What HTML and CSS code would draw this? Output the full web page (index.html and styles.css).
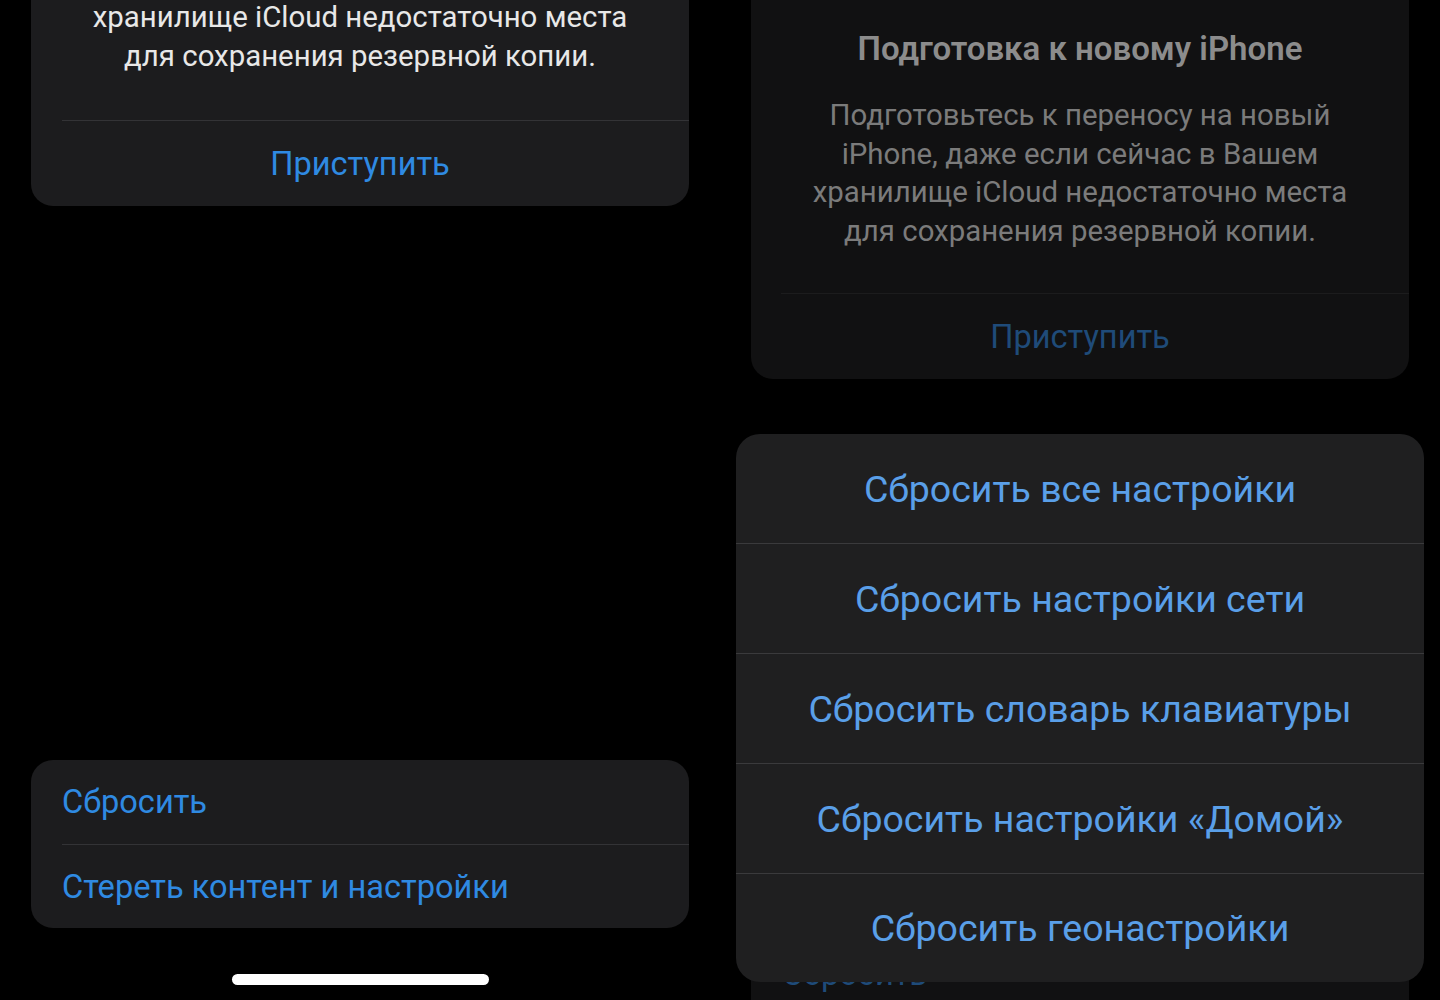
FILE: index.html
```html
<!DOCTYPE html>
<html lang="ru">
<head>
  <meta charset="UTF-8">
  <meta name="viewport" content="width=device-width, initial-scale=1.0">
  <title>Перенос или сброс iPhone</title>
  <link rel="stylesheet" href="styles.css">
</head>
<body>

  <div class="screens">

    <!-- Экран 1: обычный список -->
    <section class="phone">
      <div class="card intro">
        <p class="intro-text">хранилище iCloud недостаточно места<br>для сохранения резервной копии.</p>
        <div class="intro-action">Приступить</div>
      </div>

      <div class="card list">
        <div class="list-row">Сбросить</div>
        <div class="list-row">Стереть контент и настройки</div>
      </div>

      <div class="home-bar"></div>
    </section>

    <!-- Экран 2: открыто меню сброса -->
    <section class="phone dimmed">
      <div class="card intro">
        <h2 class="intro-title">Подготовка к новому iPhone</h2>
        <p class="intro-text">Подготовьтесь к переносу на новый<br>iPhone, даже если сейчас в Вашем<br>хранилище iCloud недостаточно места<br>для сохранения резервной копии.</p>
        <div class="intro-action">Приступить</div>
      </div>

      <div class="card list">
        <div class="list-row">Сбросить</div>
      </div>

      <div class="sheet">
        <div class="sheet-row">Сбросить все настройки</div>
        <div class="sheet-row">Сбросить настройки сети</div>
        <div class="sheet-row">Сбросить словарь клавиатуры</div>
        <div class="sheet-row">Сбросить настройки «Домой»</div>
        <div class="sheet-row">Сбросить геонастройки</div>
      </div>
    </section>

  </div>

</body>
</html>
```

FILE: styles.css
```css
* {
  margin: 0;
  padding: 0;
  box-sizing: border-box;
}

body {
  background: #000;
  font-family: 'Roboto', 'Noto Sans', sans-serif;
  overflow: hidden;
}

.screens {
  display: flex;
  width: 1440px;
  height: 1000px;
}

.phone {
  position: relative;
  width: 720px;
  height: 1000px;
  display: flex;
  flex-direction: column;
  padding-left: 31px;
  padding-right: 31px;
}

.card {
  background: #1c1c1e;
  border-radius: 22px;
}

/* Блок "Подготовка к новому iPhone" */
.intro {
  margin-top: -22px;
  padding-top: 20px;
}

.intro-title {
  font-size: 33px;
  font-weight: 500;
  line-height: 38px;
  text-align: center;
  color: #ebebeb;
  margin-bottom: 28px;
}

.intro-text {
  font-size: 29.4px;
  line-height: 38.5px;
  text-align: center;
  color: #e8e8e8;
  padding-bottom: 45px;
  border-bottom: 1px solid #333336;
  margin-left: 31px;
  padding-right: 31px;
}

.intro-action {
  height: 85px;
  display: flex;
  align-items: center;
  justify-content: center;
  font-size: 32.6px;
  color: #2f8ae2;
}

/* Список действий */
.list {
  margin-top: auto;
}

.list-row {
  height: 84px;
  display: flex;
  align-items: center;
  margin-left: 31px;
  font-size: 32.6px;
  color: #2f8ae2;
}

.list-row + .list-row {
  border-top: 1px solid #333336;
}

.home-bar {
  align-self: center;
  width: 257px;
  height: 11px;
  border-radius: 6px;
  background: #fff;
  margin-top: 46px;
  margin-bottom: 15px;
}

/* Затемнённый экран под меню */
.dimmed .card {
  background: #111112;
}

.dimmed .intro {
  padding-top: 52px;
}

.dimmed .intro-title {
  color: #8c8c8c;
  font-weight: 600;
}

.dimmed .intro-text {
  color: #7b7b7b;
  padding-bottom: 43px;
  border-bottom-color: #1c1c1d;
  margin-left: 30px;
  padding-right: 30px;
}

.dimmed .intro-action {
  height: 85px;
  color: #1f4b79;
}

.dimmed .list {
  margin-top: auto;
  height: 68px;
  border-radius: 22px 22px 0 0;
}

.dimmed .list-row {
  color: #1f4b79;
}

/* Меню сброса */
.sheet {
  position: absolute;
  top: 434px;
  left: 16px;
  width: 688px;
  background: #1f1f20;
  border-radius: 24px;
  overflow: hidden;
}

.sheet-row {
  height: 110px;
  display: flex;
  align-items: center;
  justify-content: center;
  font-size: 37.5px;
  color: #5a9fe8;
}

.sheet-row + .sheet-row {
  border-top: 1px solid #3a3a3c;
}

.sheet-row:first-child {
  height: 109px;
}

.sheet-row:last-child {
  height: 109px;
}
```
